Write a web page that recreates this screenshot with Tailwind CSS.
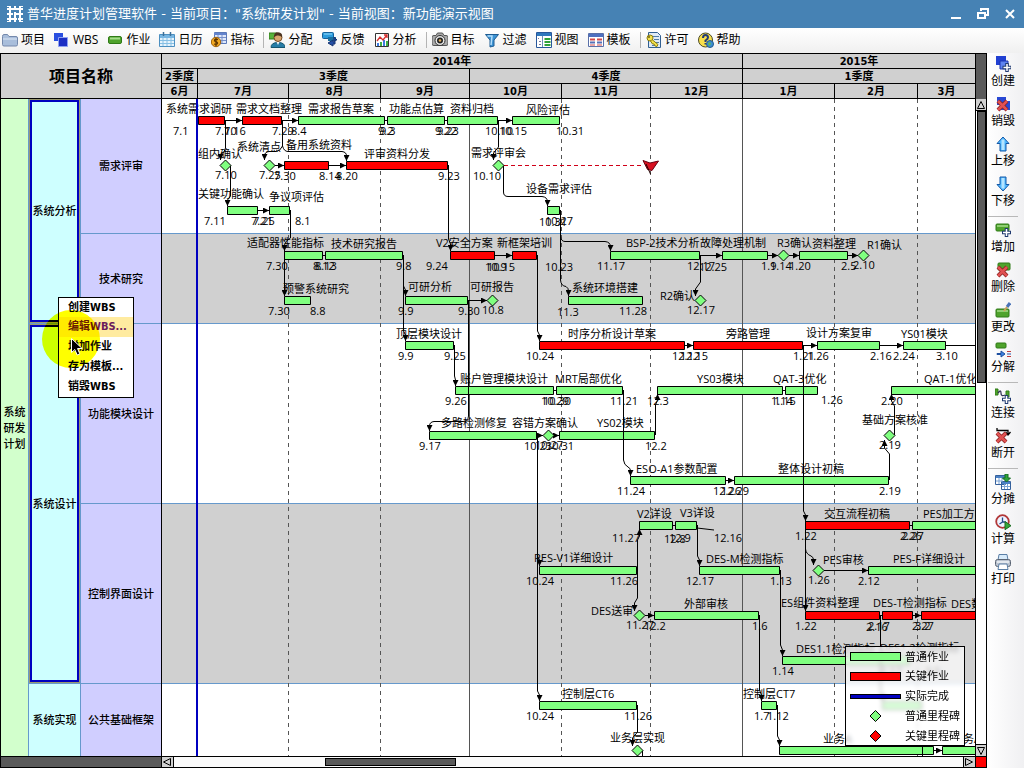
<!DOCTYPE html>
<html lang="zh-CN">
<head>
<meta charset="utf-8">
<meta name="viewport" content="width=device-width, initial-scale=1">
<title>普华进度计划管理软件</title>
<script src="https://cdn.jsdelivr.net/npm/@tailwindcss/browser@4"></script>
</head>
<body class="flex h-screen flex-col overflow-hidden bg-[#f6f7f8] font-['Open_Sans','Noto_Sans_CJK_SC',sans-serif] text-[12px] leading-4 text-black">

<header class="flex h-7 shrink-0 items-center bg-[#4682b4] pl-[7px] pr-2 text-white">
  <svg class="size-4 shrink-0" viewBox="0 0 16 16" stroke="#fff" stroke-width="2" aria-hidden="true"><path d="M3 0v16M8 0v4M8 6v10M13 0v16M0 3h16M0 8h6M7 8h9M0 13h10M11 13h5"/><path d="M0 .5h2M14 .5h2M0 15.500h2M14 15.500h2" stroke-width="1"/></svg>
  <h1 class="ml-1 flex-1 whitespace-nowrap font-['DejaVu_Sans','Noto_Sans_CJK_SC',sans-serif] text-[13px] leading-7">普华进度计划管理软件 - 当前项目："系统研发计划" - 当前视图：新功能演示视图</h1>
  <div class="flex items-center gap-[14px]">
    <button type="button" aria-label="最小化"><svg class="h-4 w-3" viewBox="0 0 12 16" stroke="#fff" stroke-width="2"><path d="M1 12h10"/></svg></button>
    <button type="button" aria-label="还原"><svg class="h-4 w-[14px]" viewBox="0 0 14 16" fill="none" stroke="#fff" stroke-width="2"><path d="M5 5V3h7v6h-3M2 7h7v5H2z"/></svg></button>
    <button type="button" aria-label="关闭"><svg class="h-4 w-3" viewBox="0 0 12 16" stroke="#fff" stroke-width="2"><path d="M2 4l8 8M10 4l-8 8"/></svg></button>
  </div>
</header>

<nav class="flex h-[25px] shrink-0 items-center overflow-hidden whitespace-nowrap bg-gradient-to-b from-white to-[#f0f0f0] pb-px pl-[2px]" aria-label="工具栏">
  <div class="flex gap-[9px]">
    <button type="button" class="flex items-center gap-[3px]"><svg class="size-4" viewBox="0 0 16 16"><path d="M.5 4.500q0-2 1.500-2h3.500l1.500 2h7q1.500 0 1.500 1.500v6.500q0 1.500-1.500 1.500H2q-1.500 0-1.500-1.500z" fill="#a9bedb" stroke="#7488ab"/><path d="M1 7h14" stroke="#dce7f5"/></svg>项目</button>
    <button type="button" class="flex items-center gap-[3px]"><svg class="size-4" viewBox="0 0 16 16"><path d="M0 1h9v8H0z" fill="#2a4fe0"/><path d="M4.500 5.500h9v9h-9z" fill="#1c2fc4" stroke="#8fa2f2"/></svg>WBS</button>
    <button type="button" class="flex items-center gap-[3px]"><svg class="size-4" viewBox="0 0 16 16"><rect x="1.500" y="4.500" width="13" height="7" rx="1.500" fill="#4fa32c" stroke="#2f7a17"/><path d="M3 6.500h10" stroke="#a5dd8a" stroke-width="2"/></svg>作业</button>
    <button type="button" class="flex items-center gap-[3px]"><svg class="size-4" viewBox="0 0 16 16"><path d="M.5 2.500h15v12H.5z" fill="#e6f3fc" stroke="#4c8fc0"/><path d="M1 3h14v3H1z" fill="#78b6e2"/><path d="M1 8.500h14M1 11.500h14M4 6v8M8 6v8M12 6v8" stroke="#86bfe4"/><path d="M4.500 0v4M11.500 0v4" stroke="#3c6f99" stroke-width="1.500"/></svg>日历</button>
    <button type="button" class="flex items-center gap-[3px]"><svg class="size-4" viewBox="0 0 16 16"><path d="M3.500.5h12v11h-12z" fill="#dfe8fb" stroke="#5b79b8"/><path d="M3 1h12v2H3z" fill="#6384cd"/><path d="M7 3v8M11 3v8M4 5.500h11M4 8.500h11" stroke="#7690ca"/><circle cx="5" cy="10" r="4.700" fill="#f4ab22" stroke="#9c5e08"/><path d="M7 7.500Q3 6.500 3.500 9q3.500 1 3 2.500-1 1.500-3.500.5M5 6v8" fill="none" stroke="#5c3300" stroke-width="1.300"/></svg>指标</button>
  </div>
  <div class="ml-[9px] mr-[5px] h-4 w-px bg-[#b4b4b4]"></div>
  <div class="flex gap-[9px]">
    <button type="button" class="flex items-center gap-[3px]"><svg class="size-4" viewBox="0 0 16 16"><path d="M0 1h8v6H0z" fill="#58b33c" stroke="#327d1c"/><path d="M2 15.500q0-5 7-5t7 5z" fill="#277ca6" stroke="#15556f"/><circle cx="9" cy="5.500" r="4" fill="#d8a56e" stroke="#7a4b22"/><path d="M5 5q0-5 4-4.800 5 .3 4 5Q11 3 8 3.500z" fill="#4b3320"/><path d="M7.500 10l1.500 3 1.500-3" fill="#f4f4f4"/></svg>分配</button>
    <button type="button" class="flex items-center gap-[3px]"><svg class="size-4" viewBox="0 0 16 16"><rect x=".5" y=".5" width="11" height="6" rx="1" fill="#2b9bdc" stroke="#15619a"/><path d="M2 2h8" stroke="#96dbfa"/><path d="M6 5h8v4H6z" fill="#1a6f9e"/><path d="M12 5l3 3h-2v4h-2v2L6 11l5-3v2h1z" fill="#244fa6" stroke="#173572"/></svg>反馈</button>
    <button type="button" class="flex items-center gap-[3px]"><svg class="size-4" viewBox="0 0 16 16"><path d="M1.500 1.500h13v13h-13z" fill="#fff" stroke="#333"/><path d="M3 14v-3h2v3zM9 14V8h2v6z" fill="#3c7be0"/><path d="M6 14v-4h2v4zM12 14V9h2v5z" fill="#3dae46"/><path d="M3 9l3-4 3 3 4-5M10 3h3v3" fill="none" stroke="#d72f2f" stroke-width="1.300"/></svg>分析</button>
  </div>
  <div class="ml-[9px] mr-[5px] h-4 w-px bg-[#b4b4b4]"></div>
  <div class="flex gap-[9px]">
    <button type="button" class="flex items-center gap-[3px]"><svg class="size-4" viewBox="0 0 16 16"><path d="M0 5q0-1.500 2-1.500h2L5.500 1h5L12 3.500h2q2 0 2 1.500v7q0 1.500-2 1.500H2Q0 13.500 0 12z" fill="#aaa" stroke="#555"/><circle cx="8" cy="8.500" r="5" fill="#e6e6e6" stroke="#333"/><circle cx="8" cy="8.500" r="3" fill="#222"/><circle cx="8" cy="8.500" r="1.300" fill="#e0ac5b"/></svg>目标</button>
    <button type="button" class="flex items-center gap-[3px]"><svg class="size-4" viewBox="0 0 16 16"><path d="M1.500 2.500h13L10 8v6l-4 1V8z" fill="#3c93d4" stroke="#1e5b91"/><path d="M3.500 4H8L7 13" fill="none" stroke="#b4defb" stroke-width="1.500"/></svg>过滤</button>
    <button type="button" class="flex items-center gap-[3px]"><svg class="size-4" viewBox="0 0 16 16"><path d="M.5.500h15v15H.5z" fill="#fff" stroke="#28579b"/><path d="M1 1h14v3H1z" fill="#2f78bd"/><path d="M6.500 4v11" stroke="#6a8eb8"/><path d="M2 6.500h1M3 9.500h2M3 12.500h2" stroke="#779"/><path d="M8.500 7h6M8.500 10h6M8.500 13h6" stroke="#2fa239" stroke-width="2"/></svg>视图</button>
    <button type="button" class="flex items-center gap-[3px]"><svg class="size-4" viewBox="0 0 16 16"><path d="M.5 1.500h15v13H.5z" fill="#fff" stroke="#596fa8"/><path d="M1 2h14v3H1z" fill="#4e70c0"/><path d="M2 7.500h5M9 7.500h5" stroke="#d14848" stroke-width="2"/><path d="M2 10.500h5M9 10.500h5" stroke="#5670b5" stroke-width="2"/><path d="M2 13h5M9 13h5" stroke="#d14848"/></svg>模板</button>
  </div>
  <div class="ml-[9px] mr-[5px] h-4 w-px bg-[#b4b4b4]"></div>
  <div class="flex gap-[9px]">
    <button type="button" class="flex items-center gap-[3px]"><svg class="size-4" viewBox="0 0 16 16"><path d="M2.500.5h9l3 3v12h-12z" fill="#dfeaf6" stroke="#315f91"/><path d="M7 4.500h6M8 7.500h5M10 10.500h3M6 13.500h6" stroke="#527da8"/><circle cx="4" cy="6" r="3" fill="#f3e24c" stroke="#8a7b0f"/><circle cx="3" cy="5" r="1" fill="#6d6110"/><path d="M6 7.500l6 5-1 2-2-.5-1-2H6.500L4.500 9z" fill="#f3e24c" stroke="#8a7b0f"/></svg>许可</button>
    <button type="button" class="flex items-center gap-[3px]"><svg class="size-4" viewBox="0 0 16 16"><circle cx="7.500" cy="8" r="7" fill="#f8e04b" stroke="#4b4a27"/><path d="M5 6q0-3 2.500-3T10 5.500q0 1.500-2.500 3V10M7.500 11v1.500" fill="none" stroke="#223b75" stroke-width="2"/><circle cx="12" cy="12" r="3.500" fill="#3a8ed0" stroke="#235a8d"/><path d="M10 11l2-1 1 2-2 2z" fill="#5fb750"/></svg>帮助</button>
  </div>
</nav>

<main class="flex min-h-0 flex-1">
  <section class="relative grid min-w-0 flex-1 grid-cols-[161px_minmax(0,1fr)_10px] grid-rows-[45px_minmax(0,1fr)_10px] border border-black">

    <!-- Header row -->
    <div class="flex items-center justify-center border-b border-r border-black bg-[#d0d0d0] pb-px text-[16px] font-bold leading-5">项目名称</div>
    <div class="flex flex-col overflow-hidden border-r border-black bg-[#d0d0d0] text-center font-['DejaVu_Sans_Condensed','Noto_Sans_CJK_SC',sans-serif] text-[11px] font-bold leading-4">
      <div class="flex h-[15px] border-b border-black"><div class="w-[581px] shrink-0 border-r border-black">2014年</div><div class="flex-1">2015年</div></div>
      <div class="flex h-[15px] border-b border-black"><div class="w-9 shrink-0 border-r border-black">2季度</div><div class="w-[272px] shrink-0 border-r border-black">3季度</div><div class="w-[273px] shrink-0 border-r border-black">4季度</div><div class="flex-1">1季度</div></div>
      <div class="flex h-[15px] border-b border-black"><div class="w-9 shrink-0 border-r border-black">6月</div><div class="w-[91px] shrink-0 border-r border-black">7月</div><div class="w-[92px] shrink-0 border-r border-black">8月</div><div class="w-[89px] shrink-0 border-r border-black">9月</div><div class="w-[92px] shrink-0 border-r border-black">10月</div><div class="w-[89px] shrink-0 border-r border-black">11月</div><div class="w-[92px] shrink-0 border-r border-black">12月</div><div class="w-[92px] shrink-0 border-r border-black">1月</div><div class="w-[83px] shrink-0 border-r border-black">2月</div><div class="flex-1">3月</div></div>
    </div>
    <div class="bg-[#5a5a5a]"></div>

    <!-- WBS tree -->
    <div class="flex overflow-hidden border-b border-r border-black text-center text-[11px] font-medium leading-4">
      <div class="flex w-7 shrink-0 items-center justify-center border-r border-[#6699cc] bg-[#d2ffcc] px-[2px]">系统研发计划</div>
      <div class="flex w-[52px] shrink-0 flex-col border-r border-[#6699cc] bg-[#ceffff]">
        <div class="h-[225px] shrink-0 border-b border-[#6699cc] bg-[#9a9a70] p-px"><div class="flex h-full items-center justify-center border-2 border-[#0000c0] bg-[#ceffff]"><span class="whitespace-nowrap">系统分析</span></div></div>
        <div class="h-[360px] shrink-0 border-b border-[#6699cc] bg-[#9a9a70] p-px"><div class="flex h-full items-center justify-center border-2 border-[#0000c0] bg-[#ceffff]"><span class="whitespace-nowrap">系统设计</span></div></div>
        <div class="flex flex-1 items-center justify-center">系统实现</div>
      </div>
      <div class="flex flex-1 flex-col bg-[#d0ceff]">
        <div class="flex h-[135px] shrink-0 items-center justify-center border-b border-[#6699cc]">需求评审</div>
        <div class="flex h-[90px] shrink-0 items-center justify-center border-b border-[#6699cc]">技术研究</div>
        <div class="flex h-[180px] shrink-0 items-center justify-center border-b border-[#6699cc]">功能模块设计</div>
        <div class="flex h-[180px] shrink-0 items-center justify-center border-b border-[#6699cc]">控制界面设计</div>
        <div class="flex flex-1 items-center justify-center">公共基础框架</div>
      </div>
    </div>

    <!-- Gantt canvas -->
    <div class="relative overflow-hidden border-b border-r border-black bg-white">
      <svg class="absolute inset-0 size-full" role="img" aria-label="甘特图">
        <defs>
          <marker id="ar" viewBox="0 0 6 6" markerWidth="6" markerHeight="6" refX="6" refY="3" orient="auto" markerUnits="userSpaceOnUse"><path d="M0 0L6 3 0 6z"/></marker>
          <path id="ms" d="M0-5.500L5.500 0 0 5.500-5.500 0z"/>
        </defs>
        <rect y="134" width="100%" height="90" fill="#d0d0d0"/>
        <rect y="404" width="100%" height="180" fill="#d0d0d0"/>
        <g fill="#6699cc"><rect y="134" width="100%" height="1"/><rect y="224" width="100%" height="1"/><rect y="404" width="100%" height="1"/><rect y="584" width="100%" height="1"/></g>
        <g transform="translate(-162 -99)">
          <path d="M288.500 99v657M380.500 99v657M561.500 99v657M650.500 99v657M834.500 99v657M917.500 99v657" stroke="#555" stroke-dasharray="4 4"/>
          <path d="M469.500 99v657M742.500 99v657" stroke="#555"/>

          <!-- normal tasks -->
          <path fill="#80ff80" stroke="#000" d="M298.500 116.500h86v8h-86zM387.500 116.500h57v8h-57zM447.500 116.500h50v8h-50zM512.500 116.500h47v8h-47z
            M227.500 206.500h30v8h-30zM269.500 206.500h20v8h-20zM547.500 206.500h12v8h-12z
            M284.500 251.500h38v8h-38zM325.500 251.500h77v8h-77zM610.500 251.500h89v8h-89zM722.500 251.500h45v8h-45zM799.500 251.500h48v8h-48z
            M284.500 296.500h26v8h-26zM405.500 296.500h62v8h-62zM568.500 296.500h74v8h-74z
            M405.500 341.500h48v8h-48zM817.500 341.500h62v8h-62zM903.500 341.500h42v8h-42z
            M455.500 386.500h98v8h-98zM556.500 386.500h66v8h-66zM657.500 386.500h125v8h-125zM785.500 386.500h32v8h-32zM891.500 386.500h95v8h-95z
            M429.500 431.500h107v8h-107zM559.500 431.500h95v8h-95z
            M630.500 476.500h95v8h-95zM734.500 476.500h154v8h-154z
            M639.500 521.500h33v8h-33zM675.500 521.500h21v8h-21zM912.500 521.500h95v8h-95z
            M539.500 566.500h97v8h-97zM699.500 566.500h80v8h-80zM868.500 566.500h140v8h-140z
            M654.500 611.500h104v8h-104zM782.500 656.500h127v8h-127z
            M539.500 701.500h97v8h-97zM761.500 701.500h15v8h-15zM882.500 701.500h39v8h-39z
            M779.500 746.500h154v8h-154zM942.500 746.500h80v8h-80z"/>
          <!-- critical tasks -->
          <path fill="#ff0000" stroke="#000" d="M198.500 116.500h26v8h-26zM242.500 116.500h39v8h-39zM284.500 161.500h44v8h-44zM346.500 161.500h101v8h-101z
            M450.500 251.500h44v8h-44zM512.500 251.500h24v8h-24zM539.500 341.500h145v8h-145zM693.500 341.500h109v8h-109z
            M805.500 521.500h104v8h-104zM805.500 611.500h74v8h-74zM882.500 611.500h30v8h-30zM921.500 611.500h80v8h-80z"/>

          <!-- links -->
          <g fill="none" stroke="#000">
            <path marker-end="url(#ar)" d="M225 120.500H242"/><path marker-end="url(#ar)" d="M282 120.500H298"/><path marker-end="url(#ar)" d="M498 120.500H512"/>
            <path marker-end="url(#ar)" d="M225.500 120V148Q225 152 220.500 155V160"/>
            <path marker-end="url(#ar)" d="M282.500 120V146Q284 151.500 288 151.500H342Q346.500 152 346.500 156V161"/>
            <path marker-end="url(#ar)" d="M282.500 146Q280 151.500 276 151.500H269Q264.500 152 264.500 156V160"/>
            <path marker-end="url(#ar)" d="M498.500 120V147L493.500 153V160"/>
            <path marker-end="url(#ar)" d="M230.500 165V196L227.500 200V206"/>
            <path marker-end="url(#ar)" d="M274 165.500H284"/><path marker-end="url(#ar)" d="M329 165.500H346"/>
            <path marker-end="url(#ar)" d="M448.500 165V239L450.500 244V251"/>
            <path marker-end="url(#ar)" d="M503.500 165V192Q503.500 196.500 508 196.500H542Q547.500 197 547.500 202V206"/>
            <path marker-end="url(#ar)" d="M258 210.500H269"/>
            <path marker-end="url(#ar)" d="M290.500 210V238Q285 241 284.500 245V251"/>
            <path marker-end="url(#ar)" d="M284.500 250V296"/>
            <path marker-end="url(#ar)" d="M560.500 210V280Q561 286 566 286.500 568.500 288 568.500 291V296"/>
            <path marker-end="url(#ar)" d="M560.500 236Q561 241.500 565 241.500H605Q610.500 242 610.500 247V251"/>
            <path marker-end="url(#ar)" d="M403.500 255V286L405.500 290V296"/>
            <path marker-end="url(#ar)" d="M403.500 286V331L405.500 335V341"/>
            <path marker-end="url(#ar)" d="M468 300.500H487"/>
            <path marker-end="url(#ar)" d="M468.500 300V416Q468 421.500 463 421.500H434Q429.500 422 429.500 426V431"/>
            <path marker-end="url(#ar)" d="M495 255.500H512"/>
            <path marker-end="url(#ar)" d="M537.500 255V331L539.500 335V341"/>
            <path marker-end="url(#ar)" d="M700 255.500H722"/>
            <path marker-end="url(#ar)" d="M700.500 255V282L695.500 289V296"/>
            <path marker-end="url(#ar)" d="M768 255.500H778"/><path marker-end="url(#ar)" d="M789 255.500H799"/><path marker-end="url(#ar)" d="M848 255.500H858"/>
            <path marker-end="url(#ar)" d="M454.500 345V376L455.500 380V386"/>
            <path marker-end="url(#ar)" d="M685 345.500H693"/><path marker-end="url(#ar)" d="M803 345.500H817"/><path marker-end="url(#ar)" d="M880 345.500H903"/>
            <path marker-end="url(#ar)" d="M803.500 345V511L805.500 515V521"/>
            <path marker-end="url(#ar)" d="M805.500 521V611"/>
            <path marker-end="url(#ar)" d="M805.500 549Q806 554 811 556 813.500 557 813.500 560V565"/>
            <path marker-end="url(#ar)" d="M623.500 390V460Q624 465 628 467 630.500 468 630.500 471V476"/>
            <path marker-end="url(#ar)" d="M655.500 435V405L657.500 400V394"/>
            <path marker-end="url(#ar)" d="M537 435.500H543"/><path marker-end="url(#ar)" d="M554 435.500H559"/>
            <path marker-end="url(#ar)" d="M537.500 435V556L539.500 560V566"/>
            <path marker-end="url(#ar)" d="M537.500 556V691L539.500 695V701"/>
            <path marker-end="url(#ar)" d="M726 480.500H734"/>
            <path marker-end="url(#ar)" d="M889.500 480V454L884.500 448V440"/>
            <path marker-end="url(#ar)" d="M894.500 435V406L891.500 401V394"/>
            <path marker-end="url(#ar)" d="M697.500 525V556L699.500 560V566"/>
            <path marker-end="url(#ar)" d="M637.500 570V540L639.500 536V529"/>
            <path marker-end="url(#ar)" d="M637.500 570V598L634.500 603V611"/>
            <path marker-end="url(#ar)" d="M645 615.500H654"/>
            <path marker-end="url(#ar)" d="M759.500 615V690L761.500 695V701"/>
            <path marker-end="url(#ar)" d="M780.500 570V645L782.500 650V656"/>
            <path marker-end="url(#ar)" d="M824 570.500H868"/><path marker-end="url(#ar)" d="M913 615.500H921"/>
            <path marker-end="url(#ar)" d="M880.500 615V690L882.500 695V701"/>
            <path marker-end="url(#ar)" d="M777.500 705V736L779.500 740V746"/>
            <path marker-end="url(#ar)" d="M637.500 705V732L632.500 738V746"/>
            <path marker-end="url(#ar)" d="M934 750.500H942"/>
          </g>
          <path fill="none" stroke="#000" d="M385 120.500h2M445 120.500h2M323 255.500h2M946 345.500h40M554 390.500h2M783 390.500h2M673 525.500h2M697 528l17 2M910 525.500h2M880 615.500h2M642.500 750v6M922.500 746v10"/>
          <path d="M504 165.500H641" stroke="#d00018" stroke-dasharray="4 3"/>
          <path d="M643 160.500l7 2.500 8.500-2-6.500 9.500-4.500-1z" fill="#d81020" stroke="#6a0010"/>
          <path d="M646 164l4.500 10" stroke="#200"/>

          <!-- milestones -->
          <g fill="#80ff80" stroke="#000">
            <use href="#ms" x="225.500" y="165.500"/><use href="#ms" x="269.500" y="165.500"/><use href="#ms" x="498.500" y="165.500"/>
            <use href="#ms" x="783.500" y="255.500"/><use href="#ms" x="863.500" y="255.500"/><use href="#ms" x="492.500" y="300.500"/><use href="#ms" x="700.500" y="300.500"/>
            <use href="#ms" x="548.500" y="435.500"/><use href="#ms" x="889.500" y="435.500"/><use href="#ms" x="818.500" y="570.500"/><use href="#ms" x="639.500" y="615.500"/><use href="#ms" x="637.500" y="750.500"/>
          </g>

          <!-- task names -->
          <g class="text-[11px]">
            <text x="166" y="113">系统需求调研</text><text x="236" y="113">需求文档整理</text><text x="308" y="113">需求报告草案</text><text x="389" y="113">功能点估算</text><text x="450" y="113">资料归档</text><text x="526" y="114">风险评估</text>
            <text x="198" y="158">组内确认</text><text x="237" y="151">系统清点</text><text x="286" y="149">备用系统资料</text><text x="364" y="158">评审资料分发</text><text x="471" y="157">需求评审会</text>
            <text x="198" y="198">关键功能确认</text><text x="269" y="201">争议项评估</text><text x="526" y="193">设备需求评估</text>
            <text x="247" y="247">适配器性能指标</text><text x="331" y="248">技术研究报告</text><text x="436" y="247">V2安全方案</text><text x="497" y="247">新框架培训</text><text x="626" y="247">BSP-2技术分析</text><text x="700" y="247">故障处理机制</text><text x="777" y="247">R3确认</text><text x="812" y="248">资料整理</text><text x="867" y="249">R1确认</text>
            <text x="283" y="293">预警系统研究</text><text x="408" y="291">可研分析</text><text x="470" y="291">可研报告</text><text x="572" y="292">系统环境搭建</text><text x="660" y="300">R2确认</text>
            <text x="396" y="338">顶层模块设计</text><text x="568" y="338">时序分析设计草案</text><text x="726" y="338">旁路管理</text><text x="806" y="337">设计方案复审</text><text x="901" y="338">YS01模块</text>
            <text x="460" y="383">账户管理模块设计</text><text x="555" y="383">MRT局部优化</text><text x="697" y="383">YS03模块</text><text x="773" y="383">QAT-3优化</text><text x="924" y="383">QAT-1优化</text>
            <text x="441" y="427">多路检测修复</text><text x="512" y="427">容错方案确认</text><text x="597" y="427">YS02模块</text><text x="862" y="424">基础方案核准</text>
            <text x="636" y="473">ESO-A1参数配置</text><text x="778" y="473">整体设计初稿</text>
            <text x="637" y="518">V2详设</text><text x="680" y="517">V3详设</text><text x="824" y="518">交互流程初稿</text><text x="923" y="518">PES加工方案</text>
            <text x="534" y="562">RES-V1详细设计</text><text x="706" y="563">DES-M检测指标</text><text x="823" y="564">PES审核</text><text x="893" y="563">PES-F详细设计</text>
            <text x="591" y="615">DES送审</text><text x="684" y="608">外部审核</text><text x="781" y="607">ES组件资料整理</text><text x="873" y="607">DES-T检测指标</text><text x="951" y="608">DES数据</text>
            <text x="796" y="653">DES1.1检测指标</text><text x="880" y="652">DES1.2检测指标</text>
            <text x="562" y="698">控制层CT6</text><text x="743" y="698">控制层CT7</text>
            <text x="610" y="742">业务层实现</text><text x="823" y="743">业务A</text><text x="963" y="743">务A</text>
          </g>

          <!-- start and finish dates -->
          <g class="text-[11px]">
            <text x="173" y="135">7.1</text><text x="215" y="135">7.10</text><text x="224" y="135">7.16</text><text x="272" y="135">7.29</text><text x="291" y="135">8.4</text><text x="378" y="135">9.2</text><text x="380" y="135">9.3</text><text x="435" y="135">9.22</text><text x="437" y="135">9.23</text><text x="485" y="135">10.10</text><text x="499" y="135">10.15</text><text x="556" y="135">10.31</text>
            <text x="215" y="179">7.10</text><text x="259" y="179">7.25</text><text x="274" y="180">7.30</text><text x="319" y="180">8.14</text><text x="336" y="180">8.20</text><text x="438" y="180">9.23</text><text x="473" y="180">10.10</text>
            <text x="204" y="225">7.11</text><text x="251" y="225">7.21</text><text x="253" y="225">7.25</text><text x="295" y="225">8.1</text><text x="539" y="226">10.31</text><text x="545" y="225">10.27</text>
            <text x="266" y="270">7.30</text><text x="313" y="270">8.12</text><text x="315" y="270">8.13</text><text x="396" y="270">9.8</text><text x="426" y="270">9.24</text><text x="485" y="271">10.9</text><text x="487" y="271">10.15</text><text x="545" y="271">10.23</text><text x="597" y="270">11.17</text><text x="687" y="270">12.17</text><text x="699" y="271">12.25</text><text x="761" y="270">1.9</text><text x="770" y="270">1.14</text><text x="789" y="270">1.20</text><text x="841" y="270">2.5</text><text x="853" y="269">2.10</text>
            <text x="268" y="315">7.30</text><text x="310" y="315">8.8</text><text x="398" y="315">9.9</text><text x="458" y="315">9.30</text><text x="482" y="314">10.8</text><text x="557" y="316">11.3</text><text x="619" y="315">11.28</text><text x="687" y="314">12.17</text>
            <text x="398" y="360">9.9</text><text x="444" y="360">9.25</text><text x="526" y="360">10.24</text><text x="672" y="360">12.12</text><text x="680" y="360">12.15</text><text x="793" y="360">1.21</text><text x="807" y="360">1.26</text><text x="870" y="360">2.16</text><text x="893" y="360">2.24</text><text x="936" y="360">3.10</text>
            <text x="445" y="405">9.26</text><text x="541" y="405">10.29</text><text x="543" y="405">10.30</text><text x="610" y="405">11.21</text><text x="647" y="405">12.3</text><text x="771" y="405">1.14</text><text x="774" y="405">1.15</text><text x="821" y="404">1.26</text><text x="881" y="405">2.20</text>
            <text x="419" y="450">9.17</text><text x="524" y="450">10.23</text><text x="535" y="449">10.27</text><text x="546" y="450">10.31</text><text x="645" y="450">12.2</text><text x="879" y="449">2.19</text>
            <text x="617" y="495">11.24</text><text x="713" y="495">12.26</text><text x="721" y="495">12.29</text><text x="879" y="495">2.19</text>
            <text x="612" y="542">11.27</text><text x="664" y="543">12.8</text><text x="669" y="542">12.9</text><text x="714" y="542">12.16</text><text x="795" y="540">1.22</text><text x="900" y="540">2.26</text><text x="902" y="540">2.27</text>
            <text x="526" y="585">10.24</text><text x="610" y="585">11.26</text><text x="686" y="585">12.17</text><text x="770" y="585">1.13</text><text x="808" y="584">1.26</text><text x="858" y="585">2.12</text>
            <text x="626" y="629">11.27</text><text x="644" y="630">12.2</text><text x="752" y="630">1.6</text><text x="795" y="630">1.22</text><text x="866" y="631">2.16</text><text x="868" y="630">2.17</text><text x="912" y="630">2.27</text><text x="915" y="630">3.2</text>
            <text x="772" y="675">1.14</text><text x="880" y="675">2.17</text><text x="925" y="675">3.5</text>
            <text x="526" y="720">10.24</text><text x="624" y="720">11.26</text><text x="754" y="720">1.7</text><text x="767" y="720">1.12</text>
          </g>
          <path d="M197 99v657" stroke="#0000c0" stroke-width="2"/>
        </g>
      </svg>

      <!-- Legend -->
      <div class="absolute bottom-[10px] right-[10px] flex w-[120px] flex-col border border-black bg-white/70 pl-1 text-[11px] backdrop-blur-[2px]">
        <div class="flex h-[19px] items-center gap-1"><span class="h-[9px] w-[51px] border border-black bg-[#80ff80]"></span>普通作业</div>
        <div class="flex h-5 items-center gap-1"><span class="h-[9px] w-[51px] border border-black bg-[#ff0000]"></span>关键作业</div>
        <div class="flex h-5 items-center gap-1"><span class="h-[5px] w-[51px] border border-black bg-[#0000c0]"></span>实际完成</div>
        <div class="flex h-5 items-center gap-1"><svg class="h-3 w-[51px]" viewBox="0 0 51 12"><path d="M25.500 .5L31 6l-5.500 5.500L20 6z" fill="#80ff80" stroke="#000"/></svg>普通里程碑</div>
        <div class="flex h-[19px] items-center gap-1"><svg class="h-3 w-[51px]" viewBox="0 0 51 12"><path d="M25.500 .5L31 6l-5.500 5.500L20 6z" fill="#ff0000" stroke="#000"/></svg>关键里程碑</div>
      </div>
    </div>

    <!-- Vertical scroll bar -->
    <div class="flex flex-col border-b border-black bg-white">
      <button type="button" aria-label="向上滚动" class="h-3 shrink-0 border-b border-black bg-[#d0d0d0]"><svg class="mx-auto size-[10px]" viewBox="0 0 10 10" fill="none" stroke="#000"><path d="M5 1.500L8.500 8.500h-7z"/></svg></button>
      <div class="flex-1"><div class="ml-px h-[272px] border border-black bg-[#5a5a5a]"></div></div>
      <button type="button" aria-label="向下滚动" class="h-3 shrink-0 border-t border-black bg-[#d0d0d0]"><svg class="mx-auto size-[10px]" viewBox="0 0 10 10" fill="none" stroke="#000"><path d="M5 8.500L8.500 1.500h-7z"/></svg></button>
    </div>

    <!-- Horizontal scroll bar -->
    <div class="border-r border-black bg-[#5a5a5a]"></div>
    <div class="flex border-r border-black bg-[#fafafa]">
      <button type="button" aria-label="向左滚动" class="w-3 shrink-0 border-r border-black bg-[#d0d0d0]"><svg class="size-[10px]" viewBox="0 0 10 10" fill="none" stroke="#000"><path d="M1.500 5L8.500 1.500v7z"/></svg></button>
      <div class="flex-1 pl-[151px]"><div class="mt-px h-2 w-[131px] border border-black bg-[#5a5a5a]"></div></div>
      <button type="button" aria-label="向右滚动" class="w-3 shrink-0 border-l border-black bg-[#d0d0d0]"><svg class="size-[10px]" viewBox="0 0 10 10" fill="none" stroke="#000"><path d="M8.500 5L1.500 1.500v7z"/></svg></button>
    </div>
    <div class="bg-[#ff0000]"></div>

    <!-- Context menu with pointer -->
    <div class="absolute left-[57px] top-[243px] flex w-[76px] flex-col border border-black bg-white text-left font-['DejaVu_Sans_Condensed','Noto_Sans_CJK_SC',sans-serif] text-[11px] font-bold leading-5" role="menu">
      <button type="button" role="menuitem" class="h-[19px] pl-[9px] text-left">创建WBS</button>
      <button type="button" role="menuitem" class="h-5 bg-[#ffeba0] pl-[9px] text-left text-[#6a1c5c]">编辑WBS...</button>
      <button type="button" role="menuitem" class="h-5 pl-[9px] text-left"><span class="text-[#1a1290]">增加作</span>业</button>
      <button type="button" role="menuitem" class="h-5 pl-[9px] text-left">存为模板...</button>
      <button type="button" role="menuitem" class="h-5 pl-[9px] text-left">销毁WBS</button>
    </div>
    <div class="pointer-events-none absolute left-[41px] top-[256px] size-[58px] rounded-full bg-[#ffff00] mix-blend-multiply"></div>
    <svg class="pointer-events-none absolute left-[70px] top-[284px] h-[18px] w-3" viewBox="0 0 12 18"><path d="M.5.500v14l3.300-3 2.400 5.500 2.600-1.200L6.500 10.500h4.700z" fill="#000" stroke="#fff"/></svg>
  </section>

  <!-- Action rail -->
  <aside class="flex w-[37px] shrink-0 flex-col bg-gradient-to-r from-white to-[#f0f0f2] pr-[5px] pt-px" aria-label="操作">
    <button type="button" class="flex h-10 flex-col items-center pt-[2px]"><svg class="size-4" viewBox="0 0 16 16"><path d="M1 0h10v9H1z" fill="#2140d2"/><path d="M5 5h8v8H5z" fill="#5e83f0" stroke="#1c35ae"/><path d="M12 7v9M7.500 11.500h9" stroke="#203a70" stroke-width="3.500"/><path d="M12 8v7M8.500 11.500h7" stroke="#fff" stroke-width="1.500"/></svg><span class="mt-px">创建</span></button>
    <button type="button" class="flex h-10 flex-col items-center pt-[2px]"><svg class="size-4" viewBox="0 0 16 16"><path d="M2 1h9v8H2zM6 5h9v9H6z" fill="#2848d4"/><path d="M3 5l9 9M12 5l-9 9" stroke="#87201f" stroke-width="4"/><path d="M3 5l9 9M12 5l-9 9" stroke="#e05252" stroke-width="2.500"/></svg><span class="mt-px">销毁</span></button>
    <button type="button" class="flex h-10 flex-col items-center pt-[2px]"><svg class="size-4" viewBox="0 0 16 16"><path d="M8 1L14 7.500H11V15H5V7.500H2z" fill="#4fb8ff" stroke="#1459a8"/><path d="M8 3.500V14" stroke="#b4e4ff" stroke-width="3"/></svg><span class="mt-px">上移</span></button>
    <button type="button" class="flex h-10 flex-col items-center pt-[2px]"><svg class="size-4" viewBox="0 0 16 16"><path d="M8 15L14 8.500H11V1H5v7.500H2z" fill="#4fb8ff" stroke="#1459a8"/><path d="M8 12.500V2" stroke="#b4e4ff" stroke-width="3"/></svg><span class="mt-px">下移</span></button>
    <div class="mx-px my-[2px] h-[2px] border-t border-[#b8b8b8]"></div>
    <button type="button" class="flex h-10 flex-col items-center pt-[2px]"><svg class="size-4" viewBox="0 0 16 16"><rect x="1" y="2" width="13" height="7" rx="1" fill="#4fa32c" stroke="#2f7a17"/><path d="M2 4h11" stroke="#a5dd8a" stroke-width="1.500"/><path d="M11.500 6v9M7 10.500h9" stroke="#203a70" stroke-width="3.500"/><path d="M11.500 7v7M8 10.500h7" stroke="#fff" stroke-width="1.500"/></svg><span class="mt-px">增加</span></button>
    <button type="button" class="flex h-10 flex-col items-center pt-[2px]"><svg class="size-4" viewBox="0 0 16 16"><rect x="3" y="1" width="12" height="7" rx="1" fill="#4fa32c" stroke="#2f7a17"/><path d="M3 5l9 9M12 5l-9 9" stroke="#87201f" stroke-width="4"/><path d="M3 5l9 9M12 5l-9 9" stroke="#e05252" stroke-width="2.500"/></svg><span class="mt-px">删除</span></button>
    <button type="button" class="flex h-10 flex-col items-center pt-[2px]"><svg class="size-4" viewBox="0 0 16 16"><rect x="1" y="7" width="13" height="8" rx="1" fill="#4fa32c" stroke="#2f7a17"/><path d="M2 9h11" stroke="#a5dd8a" stroke-width="1.500"/><path d="M15 1l-3 4" stroke="#4b74b8" stroke-width="3"/><path d="M12 5l-3 4" stroke="#c9a45c" stroke-width="2"/></svg><span class="mt-px">更改</span></button>
    <button type="button" class="flex h-10 flex-col items-center pt-[2px]"><svg class="size-4" viewBox="0 0 16 16"><rect x="1" y="1" width="10" height="5" rx="1" fill="#4fa32c" stroke="#2f7a17"/><path d="M2 11.500h4V9l4 3-4 3v-2.500H2z" fill="#3f83e0" stroke="#1d4fa0"/><path d="M12 9.500h4M12 14.500h4" stroke="#c03a3a"/><path d="M12 12h4" stroke="#2b56b0"/></svg><span class="mt-px">分解</span></button>
    <div class="mx-px my-[2px] h-[2px] border-t border-[#b8b8b8]"></div>
    <button type="button" class="flex h-10 flex-col items-center pt-[2px]"><svg class="size-4" viewBox="0 0 16 16"><path d="M0 1h3v6H0zM11 3h3v6h-3z" fill="#4fa32c" stroke="#2f7a17"/><path d="M3 5q3-4 3 0t4 2" fill="none" stroke="#335" stroke-width="1.300"/><path d="M11.500 7v9M7 11.500h9" stroke="#203a70" stroke-width="3.500"/><path d="M11.500 8v7M8 11.500h7" stroke="#fff" stroke-width="1.500"/></svg><span class="mt-px">连接</span></button>
    <button type="button" class="flex h-10 flex-col items-center pt-[2px]"><svg class="size-4" viewBox="0 0 16 16"><path d="M2 0v2.500h11V6M10.500 4L13 7l2.500-3" fill="none" stroke="#000" stroke-width="1.300"/><path d="M2 5l9 9M11 5l-9 9" stroke="#87201f" stroke-width="4"/><path d="M2 5l9 9M11 5l-9 9" stroke="#e05252" stroke-width="2.500"/></svg><span class="mt-px">断开</span></button>
    <div class="mx-px my-[2px] h-[2px] border-t border-[#b8b8b8]"></div>
    <button type="button" class="flex h-10 flex-col items-center pt-[2px]"><svg class="size-4" viewBox="0 0 16 16"><path d="M.5 1.500h10v9H.5zM6.500 7.500h9v8h-9z" fill="#fff" stroke="#35619c"/><path d="M1 2h9v2H1zM7 8h8v2H7z" fill="#4b82c6"/><path d="M4 4v6M7 4v4M1 7h6M9.500 10v5M12.500 10v5M7 12.500h8" stroke="#7ba3d4"/><path d="M10 0h3v4h2.500L11.500 8 7.500 4H10z" fill="#2fa53a" stroke="#176b20"/></svg><span class="mt-px">分摊</span></button>
    <button type="button" class="flex h-10 flex-col items-center pt-[2px]"><svg class="size-4" viewBox="0 0 16 16"><circle cx="7.500" cy="7.500" r="6.300" fill="#eef4ff" stroke="#b23838" stroke-width="1.800"/><path d="M7.500 3.500V8l-3 2M7.500 8h3" fill="none" stroke="#244a8a" stroke-width="1.300"/><path d="M10 7.500l6 4.200-6 4z" fill="#35a83a" stroke="#1b6b20"/></svg><span class="mt-px">计算</span></button>
    <button type="button" class="flex h-10 flex-col items-center pt-[2px]"><svg class="size-4" viewBox="0 0 16 16"><path d="M4 .5h8L13 6H3z" fill="#d8ebfa" stroke="#5b7fa6"/><rect x=".5" y="5.500" width="15" height="7" rx="2" fill="#b9c2cf" stroke="#5a6473"/><path d="M2 8h12" stroke="#f2f5f9" stroke-width="1.500"/><path d="M4 10h8l1 5.500H3z" fill="#fff" stroke="#5b7fa6"/></svg><span class="mt-px">打印</span></button>
  </aside>
</main>
</body>
</html>
